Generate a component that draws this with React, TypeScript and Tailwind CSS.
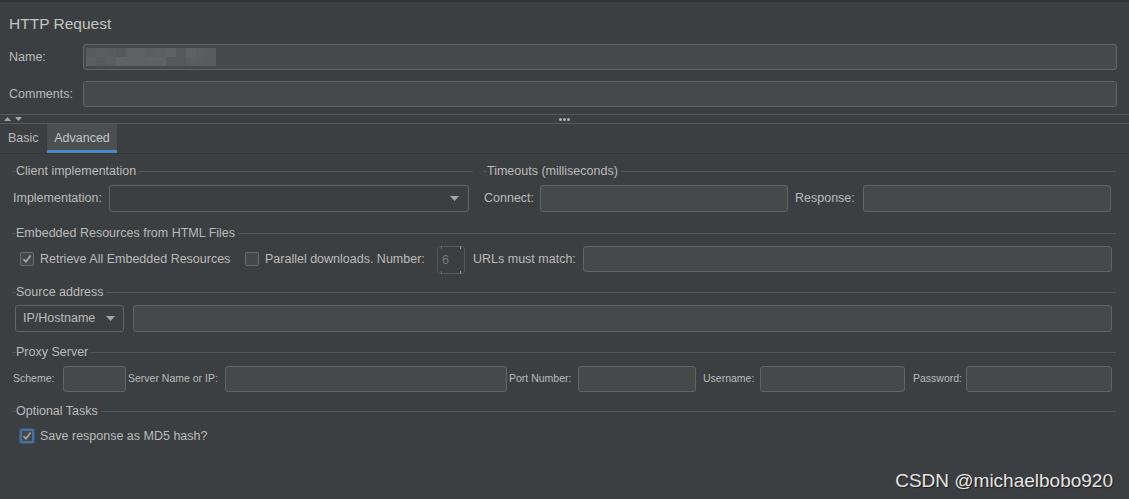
import type { ReactNode } from 'react';

const FONT = { fontFamily: '"Liberation Sans", Arial, sans-serif' };

function Field({ className = '' }: { className?: string }) {
  return <div className={`h-full rounded-[3px] border border-[#626466] bg-[#45494a] ${className}`} />;
}

function Arrow() {
  return (
    <svg width="9" height="5" viewBox="0 0 9 5" className="shrink-0">
      <path d="M0 0h9L4.5 5z" fill="#a3a6a8" />
    </svg>
  );
}

function Check({ checked = false, focused = false }: { checked?: boolean; focused?: boolean }) {
  return (
    <div
      className={`flex h-[14px] w-[14px] shrink-0 items-center justify-center rounded-[2px] bg-[#43494a] ${
        focused ? 'border-2 border-[#4a719a] ring-1 ring-[#3a5877]' : 'border border-[#6b6d6f]'
      }`}
    >
      {checked && (
        <svg width="10" height="10" viewBox="0 0 10 10">
          <path d="M1.5 5.2l2.4 2.6L8.6 1.6" fill="none" stroke="#a9abad" strokeWidth="1.6" />
        </svg>
      )}
    </div>
  );
}

function Header({ title, className = '' }: { title: string; className?: string }) {
  return (
    <div className={`flex h-[16px] items-center ${className}`}>
      <div className="h-px w-[4px] bg-[#55585a]" />
      <span className="leading-none">{title}</span>
      <div className="ml-[3px] h-px flex-1 bg-[#55585a]" />
    </div>
  );
}

function Small({ children, w }: { children: ReactNode; w: string }) {
  return <span className={`shrink-0 text-[10.5px] ${w}`}>{children}</span>;
}

// pixelated (blurred) name value
const mosaic = [
  ['#565a5c', '#5a5e60', '#595d5f', '#55595b', '#5d6163', '#5e6264', '#5a5e60', '#5c6062', '#5e6264', '#56595b', '#5e6264', '#5a5e60', '#595d5f'],
  ['#5b5f61', '#55595b', '#5a5e60', '#5f6365', '#5e6264', '#5d6163', '#5f6365', '#5f6365', '#55595b', '#56595b', '#5a5e60', '#595d5f', '#585c5e'],
];

export default function App() {
  return (
    <div style={FONT} className="flex h-[499px] w-full flex-col overflow-hidden border-t-2 border-[#303234] bg-[#3c3f41] text-[12.5px] text-[#bbbbbb]">
      {/* title */}
      <div className="flex h-[42px] items-center px-[9px] pt-[2px] text-[15.5px] text-[#c4c4c4]">HTTP Request</div>

      <div className="flex h-[26px] items-center pr-[12px]">
        <span className="w-[83px] shrink-0 pl-[9px]">Name:</span>
        <div className="flex h-full flex-1 items-center rounded-[3px] border border-[#626466] bg-[#45494a] pl-[2px]">
          <svg width="130" height="18" viewBox="0 0 130 18">
            {mosaic.map((row, r) =>
              row.map((c, i) => <rect key={`${r}-${i}`} x={i * 10} y={r * 9} width="10" height="9" fill={c} />)
            )}
          </svg>
        </div>
      </div>

      <div className="mt-[11px] flex h-[26px] items-center pr-[12px]">
        <span className="w-[83px] shrink-0 pl-[9px]">Comments:</span>
        <Field className="flex-1" />
      </div>

      {/* splitter */}
      <div className="mt-[7px] flex h-[10px] items-center border-y border-[#56595b] px-[4px]">
        <svg width="22" height="6" viewBox="0 0 22 6">
          <path d="M0 5h7L3.5 1z" fill="#a6a8aa" />
          <path d="M11 1h7L14.5 5z" fill="#a6a8aa" />
        </svg>
        <div className="flex flex-1 justify-center gap-[1px] pr-[22px]">
          <span className="h-[3px] w-[3px] rounded-full bg-[#b0b2b4]" />
          <span className="h-[3px] w-[3px] rounded-full bg-[#b0b2b4]" />
          <span className="h-[3px] w-[3px] rounded-full bg-[#b0b2b4]" />
        </div>
      </div>

      {/* tabs */}
      <div className="flex h-[30px] border-b border-[#323436]">
        <div className="flex w-[47px] items-center pl-[8px]">Basic</div>
        <div className="flex w-[70px] items-center justify-center border-b-[3px] border-[#4a88c7] bg-[#4b4f52] pt-[3px] text-[#c6c6c6]">
          Advanced
        </div>
      </div>

      <div className="pl-[12px] pr-[13px]">
        {/* client / timeouts */}
        <div className="mt-[9px] flex gap-[8px]">
          <div className="w-[461px] shrink-0">
            <Header title="Client implementation" />
            <div className="mt-[6px] flex h-[27px] items-center pl-[1px] pr-[4px]">
              <span className="w-[96px] shrink-0">Implementation:</span>
              <div className="flex h-full flex-1 items-center justify-end rounded-[3px] border border-[#626466] bg-[#3c3f41] pr-[9px]">
                <Arrow />
              </div>
            </div>
          </div>
          <div className="flex-1">
            <Header title="Timeouts (milliseconds)" className="pl-[2px]" />
            <div className="mt-[6px] flex h-[27px] items-center pl-[3px] pr-[5px]">
              <span className="w-[56px] shrink-0">Connect:</span>
              <Field className="w-[248px] shrink-0" />
              <span className="w-[75px] shrink-0 pl-[7px]">Response:</span>
              <Field className="flex-1" />
            </div>
          </div>
        </div>

        {/* embedded resources */}
        <Header title="Embedded Resources from HTML Files" className="mt-[13px]" />
        <div className="mt-[5px] flex h-[26px] items-center pl-[8px]">
          <Check checked />
          <span className="ml-[6px] w-[205px] shrink-0">Retrieve All Embedded Resources</span>
          <Check />
          <span className="ml-[6px] w-[172px] shrink-0">Parallel downloads. Number:</span>
          <div className="relative flex h-[28px] w-[28px] shrink-0 items-center self-start rounded-[3px] border border-[#56595b] pl-[4px] text-[#76797b]">
            6
            <span className="absolute -top-px left-[3px] h-[3px] w-px bg-[#6b6e70]" />
            <span className="absolute -top-px right-[3px] h-[3px] w-px bg-[#6a9bc9]" />
            <span className="absolute -bottom-px left-[3px] h-[3px] w-px bg-[#6b6e70]" />
            <span className="absolute -bottom-px right-[3px] h-[3px] w-px bg-[#6a9bc9]" />
          </div>
          <span className="w-[118px] shrink-0 pl-[8px]">URLs must match:</span>
          <Field className="mr-[4px] flex-1" />
        </div>

        {/* source address */}
        <Header title="Source address" className="mt-[12px]" />
        <div className="mt-[5px] flex h-[27px] items-center gap-[9px] pl-[3px] pr-[4px]">
          <div className="flex h-full w-[109px] shrink-0 items-center justify-between rounded-[3px] border border-[#626466] pl-[7px] pr-[8px]">
            <span>IP/Hostname</span>
            <Arrow />
          </div>
          <Field className="flex-1" />
        </div>

        {/* proxy */}
        <Header title="Proxy Server" className="mt-[12px]" />
        <div className="mt-[6px] flex h-[26px] items-center pl-[1px]">
          <Small w="w-[50px]">Scheme:</Small>
          <Field className="w-[63px] shrink-0" />
          <Small w="w-[99px] pl-[2px]">Server Name or IP:</Small>
          <Field className="w-[282px] shrink-0" />
          <Small w="w-[71px] pl-[2px]">Port Number:</Small>
          <Field className="w-[118px] shrink-0" />
          <Small w="w-[64px] pl-[7px]">Username:</Small>
          <Field className="w-[145px] shrink-0" />
          <Small w="w-[61px] pl-[8px]">Password:</Small>
          <Field className="w-[146px] shrink-0" />
        </div>

        {/* optional */}
        <Header title="Optional Tasks" className="mt-[11px]" />
        <div className="mt-[4px] flex h-[26px] items-center pl-[8px]">
          <Check checked focused />
          <span className="ml-[6px]">Save response as MD5 hash?</span>
        </div>
      </div>

      <div className="mb-[7px] mt-auto flex justify-end pr-[16px]">
        <span className="text-[19px] leading-[22px] text-[#e4e4e4] [text-shadow:1px_1px_1px_#1e1e1e]">
          CSDN @michaelbobo920
        </span>
      </div>
    </div>
  );
}
